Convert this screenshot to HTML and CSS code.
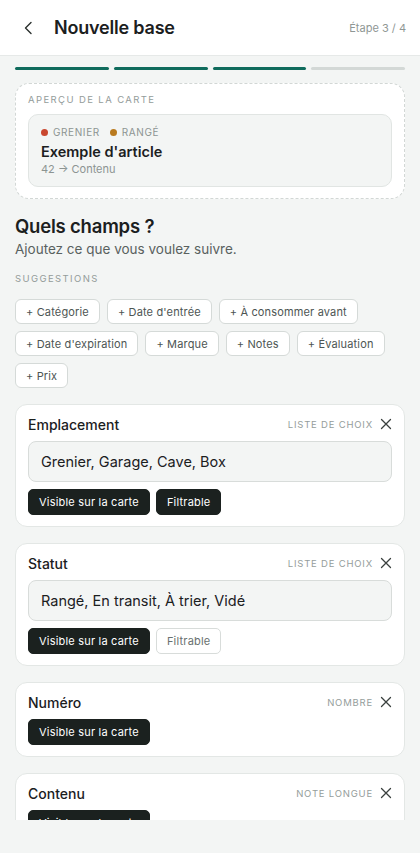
FILE: index.html
```html
<!DOCTYPE html>
<html lang="fr">
<head>
    <meta charset="UTF-8">
    <meta name="viewport" content="width=device-width, initial-scale=1.0">
    <title>Nouvelle base</title>
    <link rel="stylesheet" href="styles.css">
</head>
<body>
    <div class="app">
        <header class="topbar">
            <button class="back" type="button" aria-label="Retour">
                <svg width="14" height="14" viewBox="0 0 14 14"><path d="M9 1.5 L3.5 7 L9 12.5" fill="none" stroke="#2a2f2d" stroke-width="1.4" stroke-linecap="round" stroke-linejoin="round"/></svg>
            </button>
            <h1 class="title">Nouvelle base</h1>
            <span class="step">Étape 3 / 4</span>
        </header>

        <main class="content">
            <div class="progress">
                <span class="seg done"></span>
                <span class="seg done"></span>
                <span class="seg done"></span>
                <span class="seg"></span>
            </div>

            <section class="preview">
                <div class="label">Aperçu de la carte</div>
                <div class="preview-card">
                    <div class="tags">
                        <span class="tag"><i class="dot red"></i>Grenier</span>
                        <span class="tag"><i class="dot amber"></i>Rangé</span>
                    </div>
                    <div class="item-name">Exemple d'article</div>
                    <div class="item-sub">42 → Contenu</div>
                </div>
            </section>

            <h2 class="question">Quels champs ?</h2>
            <p class="hint">Ajoutez ce que vous voulez suivre.</p>

            <div class="label">Suggestions</div>
            <div class="chips">
                <button class="chip" type="button">+ Catégorie</button>
                <button class="chip" type="button">+ Date d'entrée</button>
                <button class="chip" type="button">+ À consommer avant</button>
                <button class="chip" type="button">+ Date d'expiration</button>
                <button class="chip" type="button">+ Marque</button>
                <button class="chip" type="button">+ Notes</button>
                <button class="chip" type="button">+ Évaluation</button>
                <button class="chip" type="button">+ Prix</button>
            </div>

            <div class="field">
                <div class="field-head">
                    <span class="field-name">Emplacement</span>
                    <span class="field-type">Liste de choix</span>
                    <span class="remove"><svg width="12" height="12" viewBox="0 0 12 12"><path d="M1.5 1.5 L10.5 10.5 M10.5 1.5 L1.5 10.5" stroke="#3a403e" stroke-width="1.3" stroke-linecap="round"/></svg></span>
                </div>
                <input class="options" type="text" value="Grenier, Garage, Cave, Box">
                <div class="toggles">
                    <button class="toggle on" type="button">Visible sur la carte</button>
                    <button class="toggle on" type="button">Filtrable</button>
                </div>
            </div>

            <div class="field">
                <div class="field-head">
                    <span class="field-name">Statut</span>
                    <span class="field-type">Liste de choix</span>
                    <span class="remove"><svg width="12" height="12" viewBox="0 0 12 12"><path d="M1.5 1.5 L10.5 10.5 M10.5 1.5 L1.5 10.5" stroke="#3a403e" stroke-width="1.3" stroke-linecap="round"/></svg></span>
                </div>
                <input class="options" type="text" value="Rangé, En transit, À trier, Vidé">
                <div class="toggles">
                    <button class="toggle on" type="button">Visible sur la carte</button>
                    <button class="toggle" type="button">Filtrable</button>
                </div>
            </div>

            <div class="field">
                <div class="field-head">
                    <span class="field-name">Numéro</span>
                    <span class="field-type">Nombre</span>
                    <span class="remove"><svg width="12" height="12" viewBox="0 0 12 12"><path d="M1.5 1.5 L10.5 10.5 M10.5 1.5 L1.5 10.5" stroke="#3a403e" stroke-width="1.3" stroke-linecap="round"/></svg></span>
                </div>
                <div class="toggles">
                    <button class="toggle on" type="button">Visible sur la carte</button>
                </div>
            </div>

            <div class="field">
                <div class="field-head">
                    <span class="field-name">Contenu</span>
                    <span class="field-type">Note longue</span>
                    <span class="remove"><svg width="12" height="12" viewBox="0 0 12 12"><path d="M1.5 1.5 L10.5 10.5 M10.5 1.5 L1.5 10.5" stroke="#3a403e" stroke-width="1.3" stroke-linecap="round"/></svg></span>
                </div>
                <div class="toggles">
                    <button class="toggle on" type="button">Visible sur la carte</button>
                </div>
            </div>
        </main>
        <footer class="bottom"></footer>
    </div>
</body>
</html>
```

FILE: styles.css
```css
*{
    box-sizing: border-box;
}
body{
    margin: 0;
    background: #f3f5f4;
    font-family: Inter, 'Noto Sans', Arial, sans-serif;
    color: #1b201e;
}
.app{
    height: 853px;
    display: flex;
    flex-direction: column;
    overflow: hidden;
}
.topbar{
    height: 56px;
    flex: none;
    display: flex;
    align-items: center;
    background: #ffffff;
    border-bottom: 1px solid #e6e9e8;
    padding: 0 14px 0 19px;
}
.back{
    border: none;
    background: none;
    padding: 0;
    width: 20px;
    height: 20px;
    display: flex;
    align-items: center;
    justify-content: center;
}
.title{
    margin: 0 0 0 15px;
    font-size: 18px;
    font-weight: 600;
    letter-spacing: -0.2px;
    flex: 1;
}
.step{
    font-size: 11px;
    color: #8f9795;
}
.content{
    flex: 1;
    overflow: hidden;
    padding: 11px 15px 0;
}
.progress{
    display: flex;
    gap: 5px;
    margin-bottom: 13px;
}
.seg{
    flex: 1;
    height: 3px;
    border-radius: 2px;
    background: #d3d8d6;
}
.seg.done{
    background: #0f6b5c;
}
.preview{
    background: #ffffff;
    border: 1.5px dashed #d2d7d5;
    border-radius: 14px;
    padding: 10px 12px 11px;
    margin-bottom: 15px;
}
.label{
    font-size: 9.5px;
    letter-spacing: 1.4px;
    text-transform: uppercase;
    color: #949c9a;
    line-height: 12px;
}
.preview .label{
    margin-bottom: 8px;
}
.preview-card{
    background: #f3f5f4;
    border: 1px solid #e1e5e3;
    border-radius: 10px;
    padding: 10px 12px 9px;
}
.tags{
    display: flex;
    gap: 10px;
    font-size: 10px;
    letter-spacing: 0.6px;
    text-transform: uppercase;
    color: #8c9492;
    line-height: 14px;
}
.tag{
    display: flex;
    align-items: center;
}
.dot{
    width: 7px;
    height: 7px;
    border-radius: 50%;
    margin-right: 5px;
}
.dot.red{
    background: #c9472f;
}
.dot.amber{
    background: #b97a1e;
}
.item-name{
    font-size: 14.5px;
    font-weight: 600;
    margin-top: 3px;
    line-height: 19px;
}
.item-sub{
    font-size: 11px;
    color: #8c9492;
    margin-top: 1px;
    line-height: 15px;
}
.question{
    margin: 0;
    font-size: 18.5px;
    font-weight: 600;
    letter-spacing: -0.2px;
    line-height: 24px;
}
.hint{
    margin: 2px 0 15px;
    font-size: 13.5px;
    line-height: 18px;
    color: #59615f;
}
.chips{
    display: flex;
    flex-wrap: wrap;
    gap: 7px;
    margin: 14px 0 16px;
}
.chip{
    height: 25px;
    padding: 0 10px;
    background: #ffffff;
    border: 1px solid #d5dad8;
    border-radius: 6px;
    font-family: inherit;
    font-size: 11px;
    letter-spacing: 0.15px;
    color: #4d5553;
}
.field{
    background: #ffffff;
    border: 1px solid #e3e7e5;
    border-radius: 12px;
    padding: 9px 12px 11px;
    margin-bottom: 16px;
}
.field-head{
    display: flex;
    align-items: center;
    height: 20px;
    margin-bottom: 7px;
}
.field-name{
    flex: 1;
    font-size: 14px;
    font-weight: 500;
}
.field-type{
    font-size: 9.5px;
    letter-spacing: 0.8px;
    text-transform: uppercase;
    color: #959d9b;
    margin-right: 7px;
}
.remove{
    display: flex;
    width: 12px;
    height: 12px;
}
.options{
    display: block;
    width: 100%;
    height: 41px;
    background: #f3f5f4;
    border: 1px solid #d8dcda;
    border-radius: 8px;
    padding: 0 12px;
    font-family: inherit;
    font-size: 14.5px;
    color: #1b201e;
    margin-bottom: 7px;
}
.toggles{
    display: flex;
    gap: 6px;
}
.toggle{
    height: 26px;
    padding: 0 10px;
    border-radius: 5px;
    border: 1px solid #d8dcda;
    background: #ffffff;
    color: #69716f;
    font-family: inherit;
    font-size: 11px;
    letter-spacing: 0.2px;
}
.toggle.on{
    background: #1b211f;
    border-color: #1b211f;
    color: #ffffff;
}
.bottom{
    height: 33px;
    flex: none;
    background: #f3f5f4;
}
```
